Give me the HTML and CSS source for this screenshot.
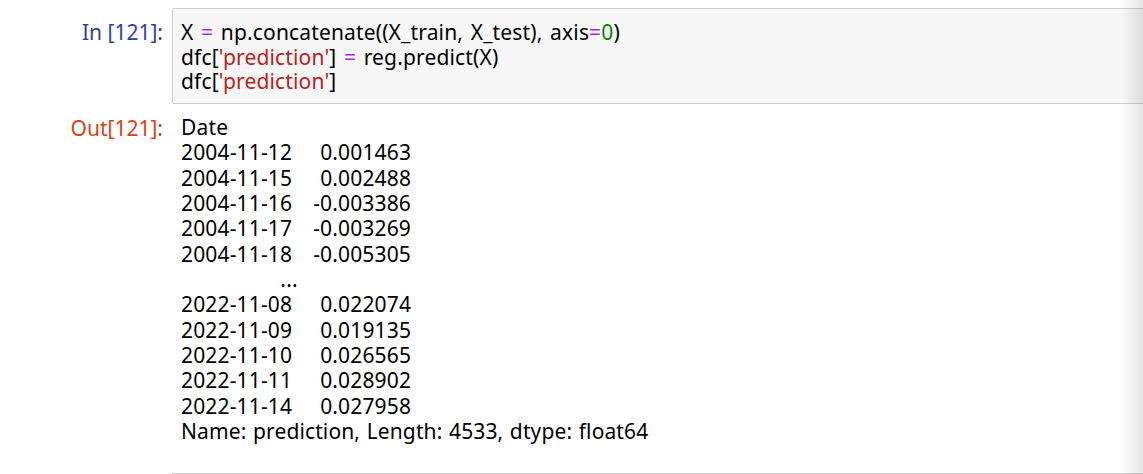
FILE: index.html
```html
<!DOCTYPE html>
<html>
<head>
<meta charset="utf-8">
<link rel="stylesheet" href="styles.css">
</head>
<body>
<div class="notebook">
  <div class="cell">
    <div class="row input-row">
      <div class="prompt in-prompt">In&nbsp;[121]:</div>
      <div class="input-area">
<pre class="code">X <span class="op">=</span> np.concatenate((X_train, X_test), axis<span class="op">=</span><span class="num">0</span>)
dfc[<span class="str">'prediction'</span>] <span class="op">=</span> reg.predict(X)
dfc[<span class="str">'prediction'</span>]</pre>
      </div>
    </div>
    <div class="row output-row">
      <div class="prompt out-prompt">Out[121]:</div>
<pre class="output">Date
2004-11-12    0.001463
2004-11-15    0.002488
2004-11-16   -0.003386
2004-11-17   -0.003269
2004-11-18   -0.005305
<span class="gap-row">                ...   </span>
2022-11-08    0.022074
2022-11-09    0.019135
2022-11-10    0.026565
2022-11-11    0.028902
2022-11-14    0.027958
<span class="name-row">Name: prediction, Length: 4533, dtype: float64</span></pre>
    </div>
  </div>
  <div class="row next-row">
    <div class="prompt"></div>
    <div class="next-area"></div>
  </div>
  <div class="edge-shadow"></div>
</div>
</body>
</html>
```

FILE: styles.css
```css
html, body {
  margin: 0;
  padding: 0;
  background: #fff;
}
.notebook {
  position: relative;
  width: 1143px;
  height: 474px;
  overflow: hidden;
  font-family: "Noto Sans", "Open Sans", sans-serif;
  font-size: 21px;
  color: #000;
}
.cell {
  padding-top: 8px;
}
.row {
  display: flex;
  align-items: flex-start;
}
.prompt {
  width: 163px;
  flex: none;
  box-sizing: border-box;
  text-align: right;
  margin-right: 9px;
  line-height: 25.3px;
}
.in-prompt {
  color: #303f9f;
  padding-top: 12px;
}
.out-prompt {
  color: #d84315;
  padding-top: 1px;
}
.input-area {
  flex: 1;
  height: 94px;
  margin-right: -20px;
  background: #f7f7f7;
  border: 1px solid #cfcfcf;
  border-radius: 2px;
}
pre {
  margin: 0;
  font-family: inherit;
  font-size: inherit;
}
.code {
  padding: 11px 0 0 8px;
  line-height: 24.5px;
  letter-spacing: 0.15px;
  word-spacing: 2px;
}
.op { color: #aa22ff; }
.str { color: #ba2121; }
.num { color: #008000; }
.output-row {
  margin-top: 11px;
}
.output {
  padding-top: 0;
  padding-left: 9px;
  line-height: 25.35px;
  letter-spacing: 0.15px;
  word-spacing: 1.4px;
}
.gap-row {
  word-spacing: 0.6px;
}
.name-row {
  letter-spacing: 0.12px;
  word-spacing: 1px;
}
.next-row {
  margin-top: 29px;
}
.next-area {
  flex: 1;
  height: 20px;
  border-top: 1px solid #cfcfcf;
}
.edge-shadow {
  position: absolute;
  top: 0;
  right: 0;
  width: 22px;
  height: 100%;
  background: linear-gradient(to right, rgba(0,0,0,0), rgba(0,0,0,0.1));
  pointer-events: none;
}
```
